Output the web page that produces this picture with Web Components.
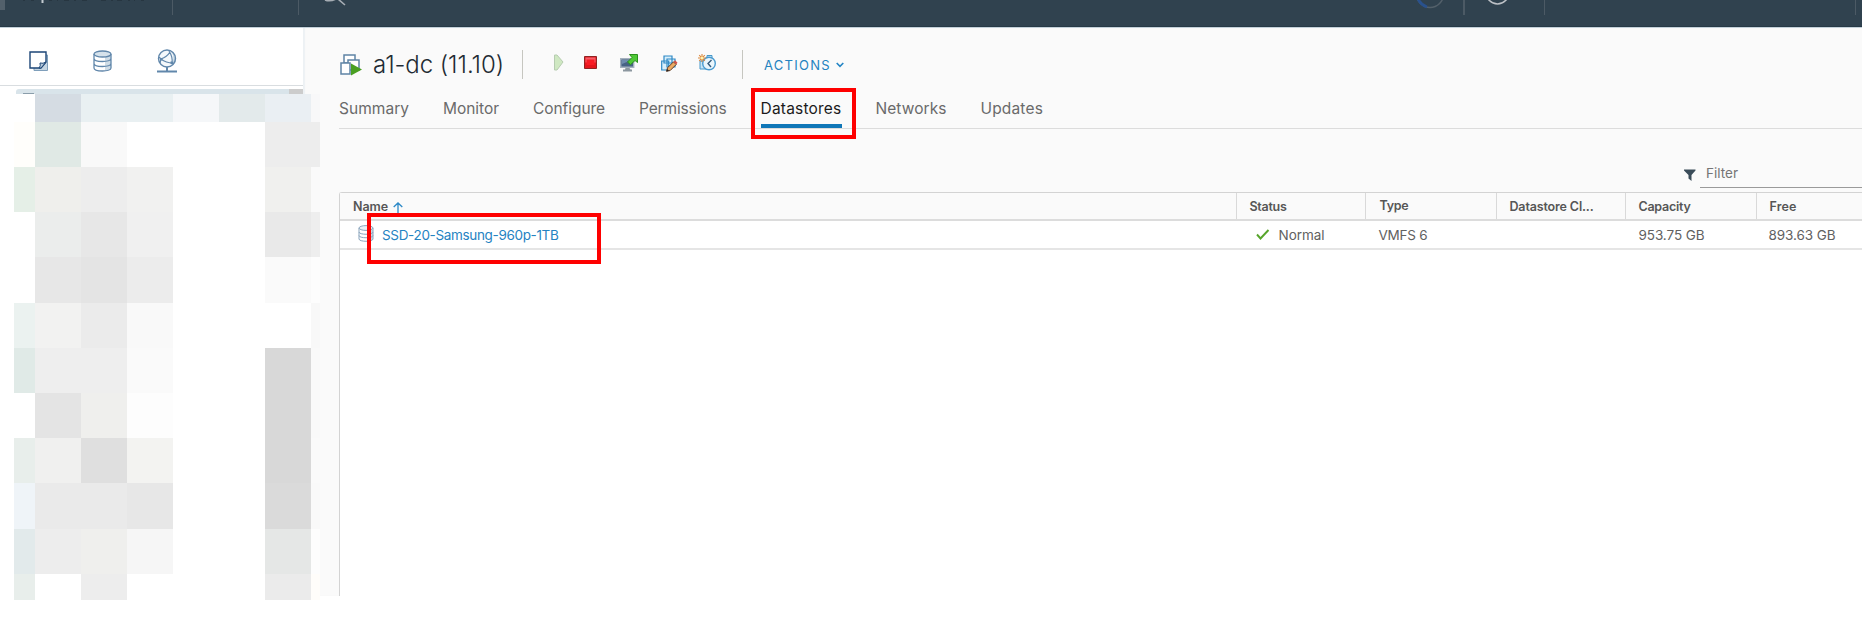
<!DOCTYPE html>
<html lang="en">
<head>
<meta charset="utf-8">
<title>a1-dc (11.10)</title>
<style>
html,body{margin:0;height:100%;background:#fff;overflow:hidden}
body{font-family:"Inter","Liberation Sans",sans-serif}
</style>
</head>
<body>
<vc-app></vc-app>
<script>
const define = (name, html, setup) => customElements.define(name, class extends HTMLElement {
  constructor(){ super(); const t=document.createElement('template'); t.innerHTML=html;
    this.attachShadow({mode:'open'}).append(t.content.cloneNode(true)); }
  connectedCallback(){ if(setup) setup(this,this.shadowRoot); }
});

/* A single line of text tracked to a fixed width */
define('fit-text', `<style>:host{display:block;white-space:nowrap;line-height:20px}span{display:inline-block}</style><span><slot></slot></span>`,
 (el,root)=>{ const w=+el.getAttribute('w'); const s=root.querySelector('span'); el.style.width=w+'px';
  const n=el.textContent.length; const cur=s.getBoundingClientRect().width; s.style.letterSpacing=((w-cur)/n)+'px'; });

define('vc-icon', `<style>:host{display:block;flex:none}svg{display:block}</style>`, (el,root)=>{
 const I={
 hosts:[20,21,`<path d="M5 4h13.500v15.500H5z" fill="#c5d5e2" stroke="#7f9fbb"/><path d="M1 1h16v10l-5 6H1z" fill="#fff" stroke="#1d4677" stroke-width="1.4"/><path d="M10 17q2-2 1-5 3 1 6-1l-5 6z" fill="#b9cbdb" stroke="#1d4677"/>`],
 db:[19,22,`<path d="M1 4v14c0 4 17 4 17 0V4" fill="#fff"/><path d="M12 5h6v13q-1 2-6 3z" fill="#cfdce6"/><ellipse cx="9.500" cy="4" rx="8.500" ry="3" fill="#d6e2eb" stroke="#6187ab" stroke-width="1.3"/><path d="M1 4v14c0 4 17 4 17 0V4M1 8.500c0 4 17 4 17 0M1 13.500c0 4 17 4 17 0" fill="none" stroke="#6187ab" stroke-width="1.3"/>`],
 net:[20,24,`<circle cx="10" cy="9.500" r="8.500" fill="#f4f8fb"/><path d="M14 2q5 7 0 15 6-3 5-8-1-5-5-7" fill="#c2d4e1"/><circle cx="10" cy="9.500" r="8.500" fill="none" stroke="#6187ab" stroke-width="1.400"/><path d="M12 2q4 6 3 12M4 10q6-2 9-7M4 10q5 4 12 4M2 8l2 2-1 4" fill="none" stroke="#6187ab" stroke-width="1.2"/><path d="M3 9h2.500v2.500H3zM13.500 12.500h2.500V15h-2.500z" fill="#6187ab"/><path d="M10 18v4M0 22.500h20" stroke="#6187ab" stroke-width="2" fill="none"/>`],
 vm:[22,22,`<path d="M4 1h11v8H4z" fill="#fff" stroke="#5f84a5" stroke-width="1.5"/><path d="M8 6h11v10H8z" fill="#fff" stroke="#5f84a5" stroke-width="1.5"/><path d="M1 9h9v11H1z" fill="#fff" stroke="#5f84a5" stroke-width="1.5"/><path d="M11 9.500l11 6-11 6z" fill="#4a9f22"/>`],
 play:[10,17,`<path d="M.5 1h2.500l6 7-6 8H.5z" fill="#cfe8c2" stroke="#b6ccb0"/>`],
 stop:[13,13,`<path d="M.5.5h12v12H.5z" fill="#e4161c" stroke="#8f2322"/><path d="M1.500 1.500h10v5h-10z" fill="#f4606a"/><path d="M2.500 3.500h8V9h-8z" fill="#f81c24"/>`],
 console:[18,18,`<path d="M.7 4.700h13v8.500H.7z" fill="#476285" stroke="#a3b0bd" stroke-width="1.4"/><path d="M2 10l11-4.500V6H2z" fill="#6e8cae"/><path d="M5.500 14h4l1 1.500h1.500v2H3v-2h2z" fill="#8c979f"/><path d="M9.500.5h8V8.500L15 6.500l-4.500 4.200L7.500 8 12 3.500z" fill="#4fc836" stroke="#2b901d"/>`],
 edit:[17,17,`<path d="M3 1h8v7H3zM.7 6h7v9h-7zM6 4h8v8H6z" fill="#d8effb" stroke="#2f89c5" stroke-width="1.2"/><path d="M5.500 16.300l1-3.500 6-6 2.700 2.700-6 6z" fill="#ecaa62" stroke="#5a3a29"/><path d="M12.500 6.700l2.700 2.700 1.300-1.700L14.200 5.300z" fill="#d45348"/><path d="M5.500 16.500l2.500-.7L6.200 14z" fill="#222"/>`],
 snap:[18,17,`<path d="M2 7h7v8H2zM9 1.500h5v6H9z" fill="#c9e5f5" stroke="#4497c9"/><circle cx="11" cy="9.500" r="6.300" fill="#eaf6fc" stroke="#4a9bd0" stroke-width="1.400"/><path d="M13.500 6L10 9.500l3 3.500" fill="none" stroke="#355b7b" stroke-width="1.400"/><path d="M4 0v8M0 4h8M1.200 1.200l5.600 5.600M6.800 1.200L1.200 6.800" stroke="#db873b" stroke-width="1.1"/><circle cx="4" cy="4" r="1.500" fill="#fff4b0"/>`],
 chev:[8,6,`<path d="M.7 1L4 4.300 7.300 1" fill="none" stroke="#2385c5" stroke-width="1.6"/>`],
 funnel:[12,12,`<path d="M0 .5h11.500v1L7.500 6v6L4.500 9.500V6L0 1.500z" fill="#3a4c59"/>`],
 up:[10,12,`<path d="M5 11.500V1M.7 5L5 1l4.300 4" fill="none" stroke="#2c89c7" stroke-width="1.300"/>`],
 check:[14,11,`<path d="M1 5.500L4.500 9.500 12.500 1" fill="none" stroke="#57a52b" stroke-width="1.900"/>`],
 dsmall:[16,17,`<path d="M1 3v11c0 3 14 3 14 0V3" fill="#fff"/><path d="M12 5h3v9q-1 1-3 1.500z" fill="#ccdae6"/><ellipse cx="8" cy="3" rx="7" ry="2.400" fill="#eaf0f5" stroke="#8ba5bd"/><path d="M1 3v11c0 3 14 3 14 0V3M1 7c0 3 14 3 14 0M1 10.500c0 3 14 3 14 0" fill="none" stroke="#8ba5bd"/>`]
 };
 const [w,h,p]=I[el.getAttribute('name')];
 root.innerHTML+=`<svg width="${w}" height="${h}" viewBox="0 0 ${w} ${h}">${p}</svg>`;
});

define('vc-header', `<style>:host{display:block;background:#30424f;border-bottom:1px solid #c3d0d9;box-sizing:border-box;height:28px;overflow:hidden}svg{display:block}</style>
<svg width="1862" height="27"><path d="M0 0h5v10H0z" fill="#52606b"/><path d="M23 0h2M31 0h3M49 0h3M57 0h1M64 0h5M74 0h2M82 0h5M101 0h5M111 0h2M117 0h5M128 0h2M134 0h1M141 0h3" stroke="#273641" stroke-width="2"/><path d="M42.500 0v3" stroke="#c3cbd1" stroke-width="2"/>
<path d="M172.500 0v15M298.500 0v15M1544.500 0v15M1855.500 0v15" stroke="#4c5a65"/><path d="M1464 0v15" stroke="#4c5a65" stroke-width="2"/>
<path d="M325 0q5 2 11-1M338-1l7 6" fill="none" stroke="#a6adb4" stroke-width="1.6"/><circle cx="1430" cy="-6" r="13.500" fill="none" stroke="#53606a" stroke-width="1.500"/><path d="M1418-1q3 6 9 8" fill="none" stroke="#29518d" stroke-width="2.800"/><circle cx="1497.500" cy="-7" r="11" fill="none" stroke="#bdc1c6" stroke-width="1.600"/><path d="M0 26.500h1862" stroke="#263946"/></svg>`);

/* Inventory tree with its contents masked by blocks */
define('vc-mosaic', `<style>:host{display:grid;width:306px;margin-left:14px;grid-template-columns:21px 46px 46px 46px 46px 46px 46px 9px;grid-template-rows:28px 45px 45px 45px 46px 45px 45px 45px 45px 46px 45px 26px;position:relative;z-index:1}</style>`,
(el,root)=>{
 const rows=['fff d5dce3 e9f0f2 e9f0f2 f5f7f9 e3eaeb eaeff3 f8f8f9','fffefb e0e9e5 f9f9f9 fff fff fff ededed ededed','e5efe7 efefec ededed f1f1f0 fff fff f0f0ee fafafa','fff ebedec e7e7e7 f0f0f0 fff fff e9e9e9 eeeeee','fff e7e7e7 e4e4e4 ececec fff fff fafafa fdfdfd','ebf2f0 f2f2f1 ebebeb f9f9f9 fff fff fff f8f8f8','e0eae7 eeeeee eeeeee fafafa fff fff d8d8d8 f9f9f9','fff e4e4e4 efefed fdfdfd fff fff d8d8d8 f9f9f9','e8eeeb f0f0ef dfdfdf f3f3f1 fff fff d8d8d8 fafafa','eff4f8 eaeaea eaeaea e7e7e7 fff fff dadada f9f9f9','e2eaeb ededed efefed f6f6f6 fff fff e5e7e6 fdfdfd','e8eeeb fff ededed fff fff fff ebebeb fffdfa'];
 for(const c of rows.join(' ').split(' ')){const d=document.createElement('div');d.style.background='#'+c;root.append(d);}
});

define('vc-sidebar', `<style>:host{display:block;width:303px;flex:none;background:#fff;height:568px}
.icons{height:58px;border-bottom:1px solid #d9dde0;display:flex;padding:21px 0 0 29px;box-sizing:border-box;gap:44px}
.icons vc-icon:nth-child(1){padding-top:2px}.icons vc-icon:nth-child(2){padding-top:1px}
.sel{margin:3px 0 0 16px;height:5px;background:#d9e4ea;border-radius:3px 0 0 0;display:flex;justify-content:space-between}
.sel i{width:14px;background:#ccc}.sel b{width:11px;height:1px;background:#8a9daa;margin:4px 0 0 7px}</style>
<div class="icons"><vc-icon name="hosts"></vc-icon><vc-icon name="db"></vc-icon><vc-icon name="net" style="margin-left:1px"></vc-icon></div>
<div class="sel"><b></b><i></i></div><vc-mosaic></vc-mosaic>`);

define('vc-titlebar', `<style>:host{display:flex;height:52px;color:#222b33}
.sep{width:1px;height:29px;background:#c6c6c0;margin-top:22px}
.t{font-size:24px;font-weight:300;margin:27px 0 0 11px}.a{color:#2482c0;font-size:13px;margin:27px 5px 0 21px}</style>
<vc-icon name="vm" style="margin-top:26px;margin-left:1px"></vc-icon>
<fit-text class="t" w="131">a1-dc (11.10)</fit-text>
<div class="sep" style="margin-left:18px"></div>
<vc-icon name="play" style="margin:26px 0 0 31px"></vc-icon>
<vc-icon name="stop" style="margin:28px 0 0 20px"></vc-icon>
<vc-icon name="console" style="margin:26px 0 0 23px"></vc-icon>
<vc-icon name="edit" style="margin:27px 0 0 23px"></vc-icon>
<vc-icon name="snap" style="margin:26px 0 0 20px"></vc-icon>
<div class="sep" style="margin-left:26px"></div>
<fit-text class="a" w="67">ACTIONS</fit-text><vc-icon name="chev" style="margin-top:34px"></vc-icon>`);

define('vc-tab', `<style>:host{display:block;height:48px;box-sizing:border-box;padding-top:19px;font-size:15.5px;color:#6a6a6a;border-bottom:4px solid transparent}
:host([active]){color:#1b1b1b;border-color:#1077b8}</style><slot></slot>`);

define('vc-tabs', `<style>:host{display:flex;gap:34px;height:48px;border-bottom:1px solid #dcdcdc}</style>
<vc-tab><fit-text w="70">Summary</fit-text></vc-tab><vc-tab><fit-text w="56">Monitor</fit-text></vc-tab><vc-tab><fit-text w="72">Configure</fit-text></vc-tab><vc-tab><fit-text w="87.500">Permissions</fit-text></vc-tab><vc-tab active><fit-text w="81">Datastores</fit-text></vc-tab><vc-tab><fit-text w="71">Networks</fit-text></vc-tab><vc-tab><fit-text w="62.500">Updates</fit-text></vc-tab>`);

define('vc-filter', `<style>:host{display:flex;height:63px;justify-content:flex-end;align-items:flex-start}
vc-icon{margin:40px 4px 0 0}.f{width:162px;height:59px;border-bottom:1px solid #9a9a9a;box-sizing:border-box;padding:34px 0 0 6px;color:#757575;font-size:13.500px}</style>
<vc-icon name="funnel"></vc-icon><div class="f"><fit-text w="32">Filter</fit-text></div>`);

define('vc-grid', `<style>:host{display:block;height:404px;border:1px solid #d3d3d3;border-width:1px 0 0 1px;border-radius:3px 0 0 0;background:#fff;box-sizing:border-box;font-size:13.500px;color:#616161}
.r{display:grid;grid-template-columns:896.500px 129px 131px 129px 131px 1fr}
.h{height:26px;background:#fafafa;border-bottom:2px solid #dcdcdc;font-size:12.500px;font-weight:600;color:#565656}
.h>div{border-right:1px solid #d9d9d9;padding:4px 0 0 13px;display:flex;overflow:hidden;box-sizing:border-box}.h>div:last-child{border:0}
.b{height:27px;border-bottom:2px solid #e5e5e5}.b>div{padding:4px 0 0 13px;display:flex}.b vc-icon{margin-top:0}</style>
<div class="r h"><div><fit-text w="35">Name</fit-text><vc-icon name="up" style="margin:5px 0 0 5px"></vc-icon></div><div><fit-text w="37">Status</fit-text></div><div style="padding-top:3px;padding-left:14px"><fit-text w="29">Type</fit-text></div><div><fit-text w="84">Datastore Cl...</fit-text></div><div><fit-text w="52">Capacity</fit-text></div><div><fit-text w="27">Free</fit-text></div></div>
<div class="r b"><div style="padding-left:18px;color:#2583c2"><vc-icon name="dsmall"></vc-icon><fit-text w="176.500" style="margin-left:8px">SSD-20-Samsung-960p-1TB</fit-text></div><div style="padding-left:19.500px"><vc-icon name="check" style="margin-top:4px"></vc-icon><fit-text w="46" style="margin-left:8.500px">Normal</fit-text></div><div><fit-text w="49">VMFS 6</fit-text></div><div></div><div><fit-text w="66">953.75 GB</fit-text></div><div style="padding-left:12px"><fit-text w="67">893.63 GB</fit-text></div></div>`);

define('vc-main', `<style>:host{display:block;flex:1;height:568px;background:#fafafa;box-sizing:border-box;padding-left:36px;box-shadow:inset 2px 0 1px #edf1f4;min-width:0}</style>
<vc-titlebar></vc-titlebar><vc-tabs></vc-tabs><vc-filter></vc-filter><vc-grid></vc-grid>`);

/* Red annotation frame laid over the page */
define('mark-box', `<style>:host{position:absolute;box-sizing:border-box;border:4px solid #fe0000;z-index:3}</style>`);

define('vc-app', `<style>:host{display:block;position:relative;height:618px;width:1862px;overflow:hidden}.body{display:flex}</style>
<vc-header></vc-header><div class="body"><vc-sidebar></vc-sidebar><vc-main></vc-main></div>
<mark-box style="left:751px;top:88px;width:105px;height:51px"></mark-box><mark-box style="left:367px;top:213px;width:234px;height:51px"></mark-box>`);
</script>
</body>
</html>
